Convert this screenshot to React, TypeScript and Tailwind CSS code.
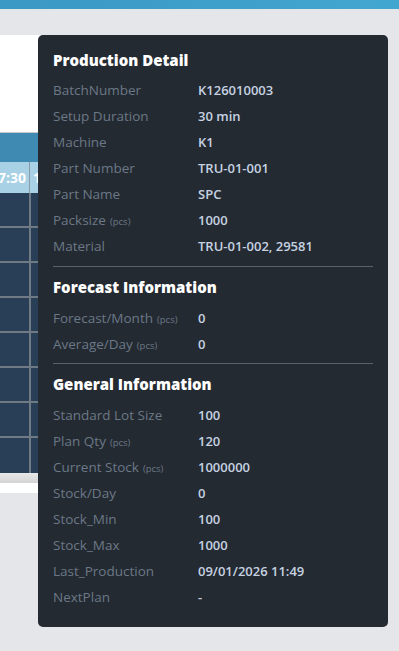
import React from "react";

type Row = { label: string; unit?: string; value: string };

const production: Row[] = [
  { label: "BatchNumber", value: "K126010003" },
  { label: "Setup Duration", value: "30 min" },
  { label: "Machine", value: "K1" },
  { label: "Part Number", value: "TRU-01-001" },
  { label: "Part Name", value: "SPC" },
  { label: "Packsize", unit: "(pcs)", value: "1000" },
  { label: "Material", value: "TRU-01-002, 29581" },
];

const forecast: Row[] = [
  { label: "Forecast/Month", unit: "(pcs)", value: "0" },
  { label: "Average/Day", unit: "(pcs)", value: "0" },
];

const general: Row[] = [
  { label: "Standard Lot Size", value: "100" },
  { label: "Plan Qty", unit: "(pcs)", value: "120" },
  { label: "Current Stock", unit: "(pcs)", value: "1000000" },
  { label: "Stock/Day", value: "0" },
  { label: "Stock_Min", value: "100" },
  { label: "Stock_Max", value: "1000" },
  { label: "Last_Production", value: "09/01/2026 11:49" },
  { label: "NextPlan", value: "-" },
];

function Rows({ rows }: { rows: Row[] }) {
  return (
    <div className="flex flex-col">
      {rows.map((r) => (
        <div key={r.label} className="flex h-[26px] items-center pt-[1px]">
          <div className="w-[145px] shrink-0 text-[13.5px] text-[#6b7887] whitespace-nowrap">
            {r.label}
            {r.unit && <span className="text-[9.5px] ml-[4px]">{r.unit}</span>}
          </div>
          <div className="text-[13px] font-semibold text-[#c6d2e1] whitespace-nowrap">{r.value}</div>
        </div>
      ))}
    </div>
  );
}

function Title({ children }: { children: React.ReactNode }) {
  return <div className="h-[20px] leading-[20px] text-[15px] font-extrabold text-white">{children}</div>;
}

export default function App() {
  const font = { fontFamily: '"Open Sans", "Noto Sans", sans-serif' };
  return (
    <div className="relative w-[399px] h-[651px] bg-[#e5e6ea] overflow-hidden" style={font}>
      <div className="h-[9px] bg-gradient-to-r from-[#3b98c4] to-[#42a7d0]" />
      <div className="pt-[26px]">
        <div className="w-[370px] h-[458px] bg-white flex flex-col">
          <div className="h-[97px]" />
          <div className="border-t border-[#c8c8c8] h-[30px] bg-[#3e8ab2]" />
          <div className="h-[31px] bg-[#a9d1e6] flex items-center text-white font-bold text-[14px]">
            <div className="w-[30px] shrink-0 text-right pr-[3px] border-r border-[#8a9aa6] h-full flex items-center justify-end whitespace-nowrap">7:30</div>
            <div className="pl-[3px]">1</div>
          </div>
          <div className="flex flex-col bg-[#293e57]">
            {[0, 1, 2, 3, 4, 5, 6, 7].map((i) => (
              <div key={i} className={"flex h-[35px] " + (i < 7 ? "border-b-2 border-[#6f7a84]" : "")}>
                <div className="w-[31px] shrink-0 border-r-2 border-[#6f7a84]" />
                <div className="flex-1" />
              </div>
            ))}
          </div>
          <div className="h-[10px] bg-gradient-to-b from-[#e8e8e8] to-[#d4d4d4]" />
        </div>
      </div>

      <div className="absolute left-[38px] top-[35px] w-[350px] h-[592px] bg-[#242a31] rounded-[5px] pl-[15px] pr-[15px] pt-[15px]">
        <Title>Production Detail</Title>
        <div className="mt-[7px]">
          <Rows rows={production} />
        </div>
        <div className="mt-[7px] h-px bg-[#59616a]" />
        <div className="mt-[10px]">
          <Title>Forecast Information</Title>
        </div>
        <div className="mt-[8px]">
          <Rows rows={forecast} />
        </div>
        <div className="mt-[6px] h-px bg-[#59616a]" />
        <div className="mt-[10px]">
          <Title>General Information</Title>
        </div>
        <div className="mt-[8px]">
          <Rows rows={general} />
        </div>
      </div>
    </div>
  );
}
